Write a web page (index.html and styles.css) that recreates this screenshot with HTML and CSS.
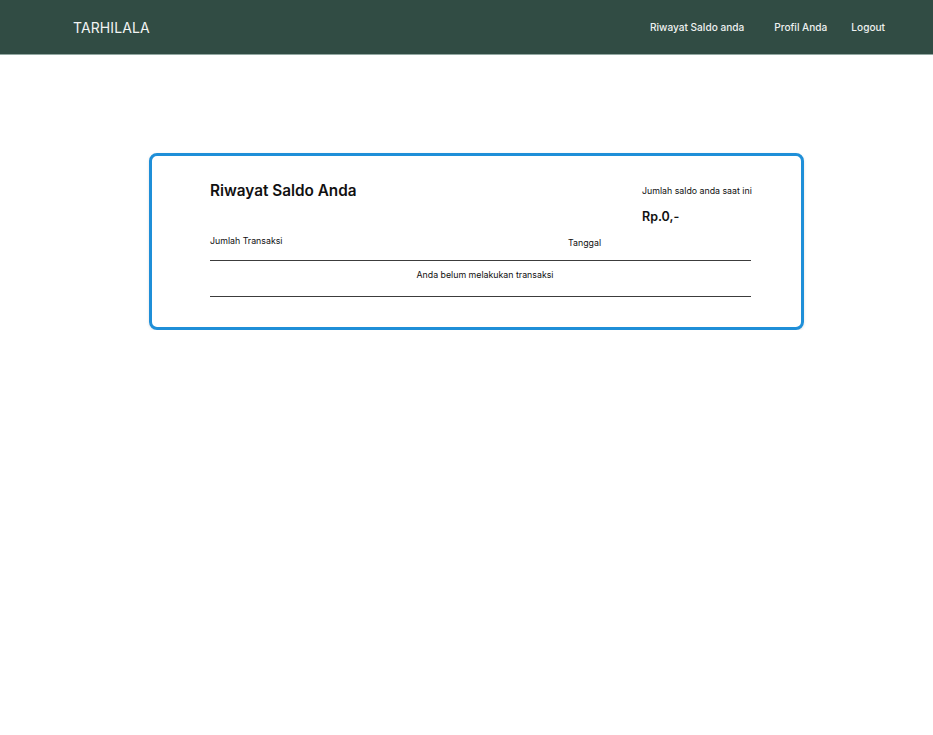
FILE: index.html
```html
<!DOCTYPE html>
<html lang="id">
<head>
<meta charset="utf-8">
<title>Riwayat Saldo</title>
<link rel="stylesheet" href="styles.css">
</head>
<body>
<header class="navbar">
  <div class="brand">TARHILALA</div>
  <nav class="nav-links">
    <a href="#" class="nav-link">Riwayat Saldo anda</a>
    <a href="#" class="nav-link">Profil Anda</a>
    <a href="#" class="nav-link">Logout</a>
  </nav>
</header>
<main class="content">
  <section class="card">
    <div class="card-head">
      <h1 class="title">Riwayat Saldo Anda</h1>
      <div class="saldo">
        <div class="saldo-label">Jumlah saldo anda saat ini</div>
        <div class="saldo-value">Rp.0,-</div>
      </div>
    </div>
    <div class="table">
      <div class="thead">
        <div class="th th-amount">Jumlah Transaksi</div>
        <div class="th th-date">Tanggal</div>
      </div>
      <div class="empty">Anda belum melakukan transaksi</div>
    </div>
  </section>
</main>
</body>
</html>
```
FILE: styles.css
```css
* { box-sizing: border-box; }
html, body { margin: 0; padding: 0; background: #ffffff; }
body { font-family: Inter, "Noto Sans", sans-serif; color: #111; }

.navbar {
  height: 55px;
  background: #314c44;
  border-bottom: 1px solid #93a8a2;
  display: flex;
  align-items: center;
  justify-content: space-between;
  padding: 0 48px 0 73px;
}
.brand {
  color: #f2f4f3;
  font-size: 14px;
  font-weight: 400;
  letter-spacing: 0.1px;
}
.nav-links { display: flex; }
.nav-link {
  color: #eef1f0;
  text-decoration: none;
  font-size: 10.1px;
  font-weight: 500;
  margin-left: 30px;
}
.nav-link:last-child { margin-left: 24px; }

.content { padding: 98px 0 0 149px; }
.card {
  width: 655px;
  height: 177px;
  border: 3px solid #1f8fd8;
  border-radius: 8px;
  box-shadow: 0 1px 3px rgba(0,0,0,0.12);
  padding: 25px 50px 0 58px;
}
.card-head {
  display: flex;
  justify-content: space-between;
  align-items: flex-start;
}
.title {
  margin: 0;
  font-size: 15.3px;
  font-weight: 600;
  line-height: 20px;
}
.saldo { width: 109px; }
.saldo-label {
  font-size: 8.8px;
  line-height: 12px;
  margin-top: 4px;
  white-space: nowrap;
}
.saldo-value {
  font-size: 12.5px;
  font-weight: 600;
  line-height: 16px;
  margin-top: 12px;
}
.table { margin-top: 10px; }
.thead {
  display: flex;
  font-size: 8.8px;
  line-height: 12px;
  padding-bottom: 11px;
  border-bottom: 1px solid #3c3c3c;
}
.th-amount { width: 358px; }
.th-date { padding-top: 2px; }
.empty {
  text-align: center;
  font-size: 8.8px;
  line-height: 12px;
  padding: 8px 0 15px 9px;
  border-bottom: 1px solid #3c3c3c;
}
```
